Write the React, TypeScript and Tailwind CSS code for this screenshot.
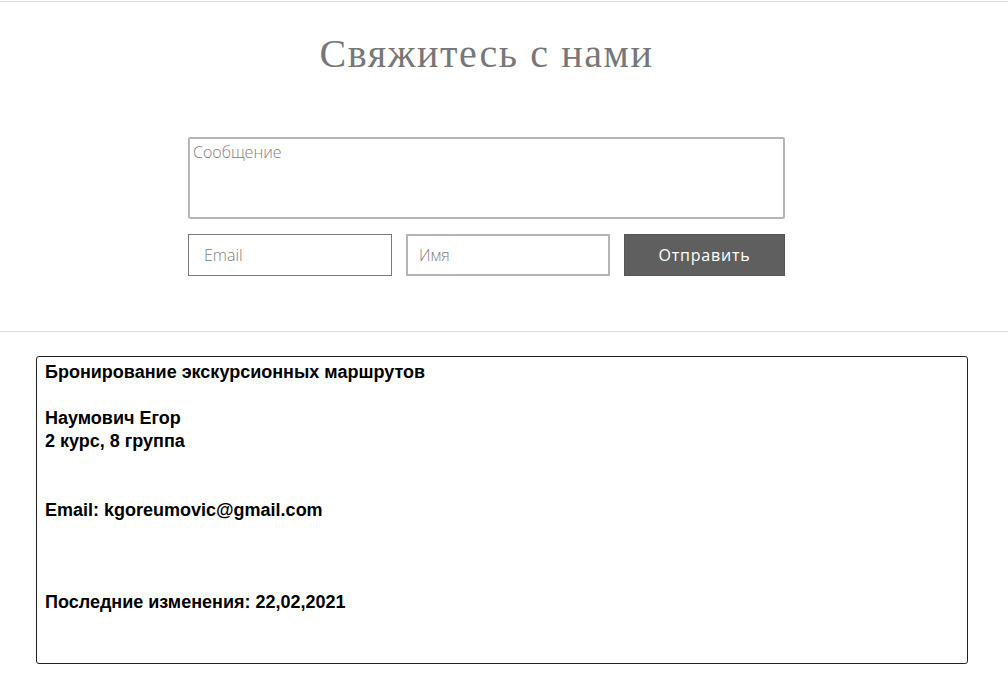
export default function App() {
  return (
    <div className="min-h-screen bg-white">
      <div className="h-px bg-[#dcdcdc] mt-px" />

      <section className="flex flex-col items-center pt-[28px] pb-[55px] pr-[35px]">
        <h1 className="text-[40px] leading-[48px] tracking-[1.6px] text-[#777777] font-['Liberation_Serif',serif]">
          Свяжитесь с нами
        </h1>

        <form className="mt-[59px] w-[597px] flex flex-col gap-[15px] font-['Open_Sans',sans-serif] font-light">
          <textarea
            placeholder="Сообщение"
            className="h-[82px] w-full resize-none border-2 border-[#b5b5b5] rounded-[2px] px-[3px] py-[2px] text-[16px] leading-[22px] placeholder:text-[#808080] outline-none"
          />
          <div className="flex gap-[14px]">
            <input
              placeholder="Email"
              className="h-[42px] w-[204px] border border-[#7a7a7a] px-[15px] text-[16px] placeholder:text-[#808080] outline-none"
            />
            <input
              placeholder="Имя"
              className="h-[42px] w-[204px] border-2 border-[#b5b5b5] px-[11px] text-[16px] placeholder:text-[#808080] outline-none"
            />
            <button
              type="button"
              className="h-[42px] w-[161px] bg-[#5f5f5f] text-white text-[16px] tracking-[0.8px] font-normal border border-[#555555]"
            >
              Отправить
            </button>
          </div>
        </form>
      </section>

      <div className="h-px bg-[#dcdcdc]" />

      <div className="pl-[36px] pr-[40px] pt-[24px] pb-[34px]">
        <div className="border border-[#222222] rounded-[3px] h-[308px] px-[8px] pt-[4px] font-['Liberation_Sans',Arial,sans-serif] font-bold text-[18px] leading-[23px] text-black">
          <p>Бронирование экскурсионных маршрутов</p>
          <p className="mt-[23px]">Наумович Егор</p>
          <p>2 курс, 8 группа</p>
          <p className="mt-[46px]">Email: kgoreumovic@gmail.com</p>
          <p className="mt-[69px]">Последние изменения: 22,02,2021</p>
        </div>
      </div>
    </div>
  );
}
